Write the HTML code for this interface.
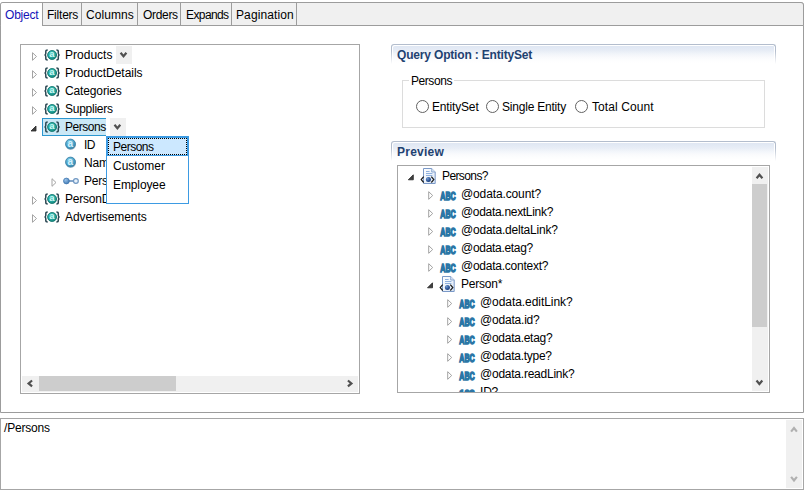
<!DOCTYPE html>
<html><head><meta charset="utf-8"><title>OData Query Builder</title>
<style>
html,body{margin:0;padding:0;}
body{width:806px;height:492px;background:#fff;position:relative;overflow:hidden;font:12px/14px "Liberation Sans",sans-serif;color:#000;}
.t{position:absolute;white-space:pre;line-height:14px;}
.abs{position:absolute;}
#folder{position:absolute;left:0;top:2px;width:802px;height:409px;border:1px solid #9c9c9c;border-radius:3px 3px 0 0;background:#fff;}
#tabbar{position:absolute;left:0;top:2px;width:802px;height:22px;border:1px solid #9c9c9c;border-radius:3px 3px 0 0;background:#f0f0f0;}
.tab{position:absolute;top:0;height:22px;border-right:1px solid #9c9c9c;}
.tab.sel{height:23px;background:#fff;border-radius:2px 0 0 0;}
.box{position:absolute;border:1px solid #a6a6a6;background:#fff;overflow:hidden;}
.sb{position:absolute;background:#f0f0f0;}
.thumb{position:absolute;background:#cdcdcd;}
.hdr{position:absolute;left:391px;width:383px;height:19px;border:1px solid #b3bdcd;border-bottom:none;border-radius:3px 3px 0 0;background:linear-gradient(#dde5f2,#ffffff);box-shadow:inset 1px 1px 0 #fff,inset -1px 0 0 #fff;}
.hdr .t{z-index:1;}
.hdr:after{content:"";position:absolute;left:-1px;right:-1px;top:6px;bottom:0;background:linear-gradient(rgba(255,255,255,0),#fff);}
.radio{position:absolute;top:19px;width:11px;height:11px;border:1px solid #626262;border-radius:50%;background:#fff;}
#group{position:absolute;left:402px;top:80px;width:361px;height:46px;border:1px solid #dcdcdc;}
#grouplabel{position:absolute;left:6px;top:-9px;width:45px;height:16px;background:#fff;}
#popup{position:absolute;left:106px;top:136px;width:81px;height:66px;border:1px solid #3d9be3;background:#fff;}
#popsel{position:absolute;left:0;top:0;width:79px;height:17px;border:1px solid #3d9be3;}
#popsel i{position:absolute;left:0;top:0;width:77px;height:15px;background:#cce8ff;border:1px dotted #000;}
#sel{position:absolute;left:42px;top:118px;width:63px;height:16px;background:#cbe8f6;border:1px solid #2d97cf;border-right:none;}
.ddbtn{position:absolute;width:16px;height:18px;background:#f0f0f0;}
svg{position:absolute;overflow:visible;}
</style></head>
<body>
<div id="folder"></div>
<div id="tabbar"><div class="tab sel" style="left:0px;width:41px"><span class="t" style="left:4px;top:5px;letter-spacing:-0.2px;color:#1414b8;">Object</span></div><div class="tab" style="left:42px;width:38px"><span class="t" style="left:4px;top:5px;letter-spacing:-0.217px;">Filters</span></div><div class="tab" style="left:81px;width:55px"><span class="t" style="left:4px;top:5px;letter-spacing:0.083px;">Columns</span></div><div class="tab" style="left:137px;width:42px"><span class="t" style="left:5px;top:5px;letter-spacing:-0.32px;">Orders</span></div><div class="tab" style="left:180px;width:50px"><span class="t" style="left:5px;top:5px;letter-spacing:-0.6px;">Expands</span></div><div class="tab" style="left:231px;width:64px"><span class="t" style="left:4px;top:5px;letter-spacing:0.1px;">Pagination</span></div></div>

<div class="box" id="treebox" style="left:20px;top:44px;width:338px;height:348px;">
 <div class="ddbtn" style="left:95px;top:1px"></div>
 <div id="sel" style="left:21px;top:73px"></div>
 <div class="ddbtn" style="left:89px;top:73px"></div>
 <span class="t" style="left:44px;top:3px;letter-spacing:0.014px;">Products</span>
<span class="t" style="left:44px;top:21px;letter-spacing:-0.038px;">ProductDetails</span>
<span class="t" style="left:44px;top:39px;letter-spacing:-0.133px;">Categories</span>
<span class="t" style="left:44px;top:57px;letter-spacing:-0.25px;">Suppliers</span>
<span class="t" style="left:44px;top:75px;letter-spacing:-0.467px;">Persons</span>
<span class="t" style="left:63px;top:93px;letter-spacing:-0.7px;">ID</span>
<span class="t" style="left:63px;top:111px;letter-spacing:-0.2px;">Name</span>
<span class="t" style="left:63px;top:129px;letter-spacing:-0.2px;">PersonDetail</span>
<span class="t" style="left:44px;top:147px;letter-spacing:-0.2px;">PersonDetails</span>
<span class="t" style="left:44px;top:165px;letter-spacing:-0.077px;">Advertisements</span>
 <svg width="338" height="348" style="left:0;top:0" viewBox="21 45 338 348"><defs>
<radialGradient id="gteal" cx="0.42" cy="0.35" r="0.75"><stop offset="0" stop-color="#4fcfc4"/><stop offset="0.55" stop-color="#22a79f"/><stop offset="1" stop-color="#11786f"/></radialGradient>
<radialGradient id="gblue" cx="0.4" cy="0.3" r="0.85"><stop offset="0" stop-color="#7fcbe6"/><stop offset="0.55" stop-color="#4aa3c9"/><stop offset="1" stop-color="#2f789c"/></radialGradient>
<radialGradient id="gnav" cx="0.35" cy="0.3" r="0.8"><stop offset="0" stop-color="#9cc4ea"/><stop offset="1" stop-color="#3a74b0"/></radialGradient>
<radialGradient id="gball" cx="0.35" cy="0.3" r="0.8"><stop offset="0" stop-color="#6f98d0"/><stop offset="0.7" stop-color="#234a8c"/><stop offset="1" stop-color="#17356e"/></radialGradient>
<linearGradient id="gdoc" x1="0" y1="0" x2="1" y2="1"><stop offset="0" stop-color="#ffffff"/><stop offset="1" stop-color="#dbe7f6"/></linearGradient>
</defs><path d="M32.5 52.7 L36.5 56.5 L32.5 60.3 Z" fill="#fff" stroke="#a3a3a3" stroke-width="1"/><g><path d="M47.7 50 q-1.9 0 -1.9 1.5 v1.8 q0 1.7 -1.3 1.7 q1.3 0 1.3 1.7 v1.8 q0 1.5 1.9 1.5" fill="none" stroke="#2c4853" stroke-width="1.5"/><path d="M56.4 50 q1.9 0 1.9 1.5 v1.8 q0 1.7 1.3 1.7 q-1.3 0 -1.3 1.7 v1.8 q0 1.5 -1.9 1.5" fill="none" stroke="#2c4853" stroke-width="1.5"/><circle cx="52.1" cy="55" r="4.5" fill="url(#gteal)" stroke="#14786f" stroke-width="0.9"/><text x="51.9" y="57.3" style="font:bold 9.5px 'Liberation Sans',sans-serif" fill="#d2f7f5" text-anchor="middle">a</text></g><path d="M32.5 70.7 L36.5 74.5 L32.5 78.3 Z" fill="#fff" stroke="#a3a3a3" stroke-width="1"/><g><path d="M47.7 68 q-1.9 0 -1.9 1.5 v1.8 q0 1.7 -1.3 1.7 q1.3 0 1.3 1.7 v1.8 q0 1.5 1.9 1.5" fill="none" stroke="#2c4853" stroke-width="1.5"/><path d="M56.4 68 q1.9 0 1.9 1.5 v1.8 q0 1.7 1.3 1.7 q-1.3 0 -1.3 1.7 v1.8 q0 1.5 -1.9 1.5" fill="none" stroke="#2c4853" stroke-width="1.5"/><circle cx="52.1" cy="73" r="4.5" fill="url(#gteal)" stroke="#14786f" stroke-width="0.9"/><text x="51.9" y="75.3" style="font:bold 9.5px 'Liberation Sans',sans-serif" fill="#d2f7f5" text-anchor="middle">a</text></g><path d="M32.5 88.7 L36.5 92.5 L32.5 96.3 Z" fill="#fff" stroke="#a3a3a3" stroke-width="1"/><g><path d="M47.7 86 q-1.9 0 -1.9 1.5 v1.8 q0 1.7 -1.3 1.7 q1.3 0 1.3 1.7 v1.8 q0 1.5 1.9 1.5" fill="none" stroke="#2c4853" stroke-width="1.5"/><path d="M56.4 86 q1.9 0 1.9 1.5 v1.8 q0 1.7 1.3 1.7 q-1.3 0 -1.3 1.7 v1.8 q0 1.5 -1.9 1.5" fill="none" stroke="#2c4853" stroke-width="1.5"/><circle cx="52.1" cy="91" r="4.5" fill="url(#gteal)" stroke="#14786f" stroke-width="0.9"/><text x="51.9" y="93.3" style="font:bold 9.5px 'Liberation Sans',sans-serif" fill="#d2f7f5" text-anchor="middle">a</text></g><path d="M32.5 106.7 L36.5 110.5 L32.5 114.3 Z" fill="#fff" stroke="#a3a3a3" stroke-width="1"/><g><path d="M47.7 104 q-1.9 0 -1.9 1.5 v1.8 q0 1.7 -1.3 1.7 q1.3 0 1.3 1.7 v1.8 q0 1.5 1.9 1.5" fill="none" stroke="#2c4853" stroke-width="1.5"/><path d="M56.4 104 q1.9 0 1.9 1.5 v1.8 q0 1.7 1.3 1.7 q-1.3 0 -1.3 1.7 v1.8 q0 1.5 -1.9 1.5" fill="none" stroke="#2c4853" stroke-width="1.5"/><circle cx="52.1" cy="109" r="4.5" fill="url(#gteal)" stroke="#14786f" stroke-width="0.9"/><text x="51.9" y="111.3" style="font:bold 9.5px 'Liberation Sans',sans-serif" fill="#d2f7f5" text-anchor="middle">a</text></g><path d="M32.5 196.7 L36.5 200.5 L32.5 204.3 Z" fill="#fff" stroke="#a3a3a3" stroke-width="1"/><g><path d="M47.7 194 q-1.9 0 -1.9 1.5 v1.8 q0 1.7 -1.3 1.7 q1.3 0 1.3 1.7 v1.8 q0 1.5 1.9 1.5" fill="none" stroke="#2c4853" stroke-width="1.5"/><path d="M56.4 194 q1.9 0 1.9 1.5 v1.8 q0 1.7 1.3 1.7 q-1.3 0 -1.3 1.7 v1.8 q0 1.5 -1.9 1.5" fill="none" stroke="#2c4853" stroke-width="1.5"/><circle cx="52.1" cy="199" r="4.5" fill="url(#gteal)" stroke="#14786f" stroke-width="0.9"/><text x="51.9" y="201.3" style="font:bold 9.5px 'Liberation Sans',sans-serif" fill="#d2f7f5" text-anchor="middle">a</text></g><path d="M32.5 214.7 L36.5 218.5 L32.5 222.3 Z" fill="#fff" stroke="#a3a3a3" stroke-width="1"/><g><path d="M47.7 212 q-1.9 0 -1.9 1.5 v1.8 q0 1.7 -1.3 1.7 q1.3 0 1.3 1.7 v1.8 q0 1.5 1.9 1.5" fill="none" stroke="#2c4853" stroke-width="1.5"/><path d="M56.4 212 q1.9 0 1.9 1.5 v1.8 q0 1.7 1.3 1.7 q-1.3 0 -1.3 1.7 v1.8 q0 1.5 -1.9 1.5" fill="none" stroke="#2c4853" stroke-width="1.5"/><circle cx="52.1" cy="217" r="4.5" fill="url(#gteal)" stroke="#14786f" stroke-width="0.9"/><text x="51.9" y="219.3" style="font:bold 9.5px 'Liberation Sans',sans-serif" fill="#d2f7f5" text-anchor="middle">a</text></g><path d="M31 131 L36 131 L36 126 Z" fill="#404040" stroke="#262626" stroke-width="0.8" stroke-linejoin="round"/><g><path d="M47.7 122 q-1.9 0 -1.9 1.5 v1.8 q0 1.7 -1.3 1.7 q1.3 0 1.3 1.7 v1.8 q0 1.5 1.9 1.5" fill="none" stroke="#2c4853" stroke-width="1.5"/><path d="M56.4 122 q1.9 0 1.9 1.5 v1.8 q0 1.7 1.3 1.7 q-1.3 0 -1.3 1.7 v1.8 q0 1.5 -1.9 1.5" fill="none" stroke="#2c4853" stroke-width="1.5"/><circle cx="52.1" cy="127" r="4.5" fill="url(#gteal)" stroke="#14786f" stroke-width="0.9"/><text x="51.9" y="129.3" style="font:bold 9.5px 'Liberation Sans',sans-serif" fill="#d2f7f5" text-anchor="middle">a</text></g><circle cx="70.7" cy="144.5" r="5.3" fill="#5f8aa3" opacity="0.6"/><circle cx="70.5" cy="144" r="4.9" fill="url(#gblue)" stroke="#3a7fa6" stroke-width="0.8"/><text x="70.4" y="146.8" style="font:bold 10px 'Liberation Sans',sans-serif" fill="#d4f1fd" text-anchor="middle">a</text><circle cx="70.7" cy="162.5" r="5.3" fill="#5f8aa3" opacity="0.6"/><circle cx="70.5" cy="162" r="4.9" fill="url(#gblue)" stroke="#3a7fa6" stroke-width="0.8"/><text x="70.4" y="164.8" style="font:bold 10px 'Liberation Sans',sans-serif" fill="#d4f1fd" text-anchor="middle">a</text><path d="M52 178.7 L56 182.5 L52 186.3 Z" fill="#fff" stroke="#a3a3a3" stroke-width="1"/><line x1="66.4" y1="181" x2="73.4" y2="181" stroke="#4f7fb2" stroke-width="1.4"/><circle cx="66.4" cy="181" r="2.9" fill="url(#gnav)" stroke="#3a72ac" stroke-width="0.7"/><circle cx="75.9" cy="181" r="2.4" fill="#e9f2fb" stroke="#6f97c2" stroke-width="1.2"/><path d="M120.6 52.72 L123.5 56.22 L126.4 52.72" fill="none" stroke="#505050" stroke-width="2.2" stroke-linejoin="miter"/><path d="M114.5 124.72 L117.4 128.22 L120.3 124.72" fill="none" stroke="#505050" stroke-width="2.2" stroke-linejoin="miter"/></svg>
 <div class="sb" style="left:1px;top:331px;width:336px;height:16px;"><div class="thumb" style="left:17px;top:0;width:137px;height:15px"></div></div>
 <svg width="338" height="348" style="left:0;top:0" viewBox="21 45 338 348"><path d="M32.08 380.5 L28.58 383.4 L32.08 386.3" fill="none" stroke="#505050" stroke-width="2.2" stroke-linejoin="miter"/><path d="M347.92 380.5 L351.42 383.4 L347.92 386.3" fill="none" stroke="#505050" stroke-width="2.2" stroke-linejoin="miter"/></svg>
</div>

<div id="popup"><div id="popsel"><i></i></div><span class="t" style="left:6px;top:3px;letter-spacing:-0.5px;">Persons</span>
<span class="t" style="left:6px;top:22px;letter-spacing:-0.014px;">Customer</span>
<span class="t" style="left:6px;top:41px;letter-spacing:-0.114px;">Employee</span></div>

<div class="hdr" style="top:44px"><span class="t" style="left:5px;top:3px;letter-spacing:-0.174px;font-weight:bold;color:#1f4271;">Query Option : EntitySet</span></div>
<div id="group"><div id="grouplabel"><span class="t" style="left:2px;top:2px;letter-spacing:-0.433px;">Persons</span></div>
<div class="radio" style="left:13px"></div><span class="t" style="left:29px;top:19px;letter-spacing:-0.163px;">EntitySet</span>
<div class="radio" style="left:83px"></div><span class="t" style="left:99px;top:19px;letter-spacing:-0.208px;">Single Entity</span>
<div class="radio" style="left:172px"></div><span class="t" style="left:189px;top:19px;letter-spacing:0.1px;">Total Count</span>
</div>
<div class="hdr" style="top:141px"><span class="t" style="left:5px;top:3px;letter-spacing:0.233px;font-weight:bold;color:#1f4271;">Preview</span></div>

<div class="box" id="prevbox" style="left:397px;top:165px;width:371px;height:226px;">
 <span class="t" style="left:44px;top:3px;letter-spacing:-0.6px;">Persons?</span>
<span class="t" style="left:63px;top:21px;letter-spacing:-0.125px;">@odata.count?</span>
<span class="t" style="left:63px;top:39px;letter-spacing:-0.307px;">@odata.nextLink?</span>
<span class="t" style="left:63px;top:57px;letter-spacing:-0.212px;">@odata.deltaLink?</span>
<span class="t" style="left:63px;top:75px;letter-spacing:-0.3px;">@odata.etag?</span>
<span class="t" style="left:63px;top:93px;letter-spacing:-0.25px;">@odata.context?</span>
<span class="t" style="left:63px;top:111px;letter-spacing:-0.217px;">Person*</span>
<span class="t" style="left:82px;top:129px;letter-spacing:-0.06px;">@odata.editLink?</span>
<span class="t" style="left:82px;top:147px;letter-spacing:-0.2px;">@odata.id?</span>
<span class="t" style="left:82px;top:165px;letter-spacing:-0.264px;">@odata.etag?</span>
<span class="t" style="left:82px;top:183px;letter-spacing:-0.264px;">@odata.type?</span>
<span class="t" style="left:82px;top:201px;letter-spacing:-0.233px;">@odata.readLink?</span>
<span class="t" style="left:82px;top:219px;letter-spacing:-0.2px;">ID?</span>
 <svg width="371" height="226" style="left:0;top:0" viewBox="398 166 371 226"><defs>
<radialGradient id="hteal" cx="0.42" cy="0.35" r="0.75"><stop offset="0" stop-color="#4fcfc4"/><stop offset="0.55" stop-color="#22a79f"/><stop offset="1" stop-color="#11786f"/></radialGradient>
<radialGradient id="hblue" cx="0.4" cy="0.3" r="0.85"><stop offset="0" stop-color="#7fcbe6"/><stop offset="0.55" stop-color="#4aa3c9"/><stop offset="1" stop-color="#2f789c"/></radialGradient>
<radialGradient id="hnav" cx="0.35" cy="0.3" r="0.8"><stop offset="0" stop-color="#9cc4ea"/><stop offset="1" stop-color="#3a74b0"/></radialGradient>
<radialGradient id="hball" cx="0.35" cy="0.3" r="0.8"><stop offset="0" stop-color="#6f98d0"/><stop offset="0.7" stop-color="#234a8c"/><stop offset="1" stop-color="#17356e"/></radialGradient>
<linearGradient id="hdoc" x1="0" y1="0" x2="1" y2="1"><stop offset="0" stop-color="#ffffff"/><stop offset="1" stop-color="#dbe7f6"/></linearGradient>
</defs><path d="M408.3 179.8 L413.3 179.8 L413.3 174.8 Z" fill="#404040" stroke="#262626" stroke-width="0.8" stroke-linejoin="round"/><path d="M423.5 168.5 h8.2 l3.5 3.5 v11.5 h-11.7 Z" fill="url(#hdoc)" stroke="#7a99c8" stroke-width="1"/><path d="M431.7 168.5 v3.5 h3.5" fill="#dce7f5" stroke="#7a99c8" stroke-width="0.8"/><line x1="426" y1="171.5" x2="429.6" y2="171.5" stroke="#8fb0dd" stroke-width="1"/><line x1="426" y1="173.5" x2="432.4" y2="173.5" stroke="#8fb0dd" stroke-width="1"/><line x1="426" y1="175.5" x2="432.4" y2="175.5" stroke="#8fb0dd" stroke-width="1"/><circle cx="428.4" cy="179.6" r="2.5" fill="url(#hball)"/><path d="M423.7 176.7 l-2.5 2.9 l2.5 2.9" fill="none" stroke="#1a1a1a" stroke-width="1.2"/><path d="M431.3 176.7 l2.5 2.9 l-2.5 2.9" fill="none" stroke="#1a1a1a" stroke-width="1.2"/><path d="M428.7 191.7 L432.7 195.5 L428.7 199.3 Z" fill="#fff" stroke="#a3a3a3" stroke-width="1"/><text x="440.3" y="199.6" font-family="Liberation Sans, sans-serif" font-size="11.8" font-weight="bold" fill="#2b76a6" stroke="#2b76a6" stroke-width="1.5" textLength="15.4" lengthAdjust="spacingAndGlyphs">ABC</text><path d="M428.7 209.7 L432.7 213.5 L428.7 217.3 Z" fill="#fff" stroke="#a3a3a3" stroke-width="1"/><text x="440.3" y="217.6" font-family="Liberation Sans, sans-serif" font-size="11.8" font-weight="bold" fill="#2b76a6" stroke="#2b76a6" stroke-width="1.5" textLength="15.4" lengthAdjust="spacingAndGlyphs">ABC</text><path d="M428.7 227.7 L432.7 231.5 L428.7 235.3 Z" fill="#fff" stroke="#a3a3a3" stroke-width="1"/><text x="440.3" y="235.6" font-family="Liberation Sans, sans-serif" font-size="11.8" font-weight="bold" fill="#2b76a6" stroke="#2b76a6" stroke-width="1.5" textLength="15.4" lengthAdjust="spacingAndGlyphs">ABC</text><path d="M428.7 245.7 L432.7 249.5 L428.7 253.3 Z" fill="#fff" stroke="#a3a3a3" stroke-width="1"/><text x="440.3" y="253.6" font-family="Liberation Sans, sans-serif" font-size="11.8" font-weight="bold" fill="#2b76a6" stroke="#2b76a6" stroke-width="1.5" textLength="15.4" lengthAdjust="spacingAndGlyphs">ABC</text><path d="M428.7 263.7 L432.7 267.5 L428.7 271.3 Z" fill="#fff" stroke="#a3a3a3" stroke-width="1"/><text x="440.3" y="271.6" font-family="Liberation Sans, sans-serif" font-size="11.8" font-weight="bold" fill="#2b76a6" stroke="#2b76a6" stroke-width="1.5" textLength="15.4" lengthAdjust="spacingAndGlyphs">ABC</text><path d="M427.5 287.8 L432.5 287.8 L432.5 282.8 Z" fill="#404040" stroke="#262626" stroke-width="0.8" stroke-linejoin="round"/><path d="M442.5 276.5 h8.2 l3.5 3.5 v11.5 h-11.7 Z" fill="url(#hdoc)" stroke="#7a99c8" stroke-width="1"/><path d="M450.7 276.5 v3.5 h3.5" fill="#dce7f5" stroke="#7a99c8" stroke-width="0.8"/><line x1="445" y1="279.5" x2="448.6" y2="279.5" stroke="#8fb0dd" stroke-width="1"/><line x1="445" y1="281.5" x2="451.4" y2="281.5" stroke="#8fb0dd" stroke-width="1"/><line x1="445" y1="283.5" x2="451.4" y2="283.5" stroke="#8fb0dd" stroke-width="1"/><circle cx="447.4" cy="287.6" r="2.5" fill="url(#hball)"/><path d="M442.7 284.7 l-2.5 2.9 l2.5 2.9" fill="none" stroke="#1a1a1a" stroke-width="1.2"/><path d="M450.3 284.7 l2.5 2.9 l-2.5 2.9" fill="none" stroke="#1a1a1a" stroke-width="1.2"/><path d="M447.7 299.7 L451.7 303.5 L447.7 307.3 Z" fill="#fff" stroke="#a3a3a3" stroke-width="1"/><text x="459.3" y="307.6" font-family="Liberation Sans, sans-serif" font-size="11.8" font-weight="bold" fill="#2b76a6" stroke="#2b76a6" stroke-width="1.5" textLength="15.4" lengthAdjust="spacingAndGlyphs">ABC</text><path d="M447.7 317.7 L451.7 321.5 L447.7 325.3 Z" fill="#fff" stroke="#a3a3a3" stroke-width="1"/><text x="459.3" y="325.6" font-family="Liberation Sans, sans-serif" font-size="11.8" font-weight="bold" fill="#2b76a6" stroke="#2b76a6" stroke-width="1.5" textLength="15.4" lengthAdjust="spacingAndGlyphs">ABC</text><path d="M447.7 335.7 L451.7 339.5 L447.7 343.3 Z" fill="#fff" stroke="#a3a3a3" stroke-width="1"/><text x="459.3" y="343.6" font-family="Liberation Sans, sans-serif" font-size="11.8" font-weight="bold" fill="#2b76a6" stroke="#2b76a6" stroke-width="1.5" textLength="15.4" lengthAdjust="spacingAndGlyphs">ABC</text><path d="M447.7 353.7 L451.7 357.5 L447.7 361.3 Z" fill="#fff" stroke="#a3a3a3" stroke-width="1"/><text x="459.3" y="361.6" font-family="Liberation Sans, sans-serif" font-size="11.8" font-weight="bold" fill="#2b76a6" stroke="#2b76a6" stroke-width="1.5" textLength="15.4" lengthAdjust="spacingAndGlyphs">ABC</text><path d="M447.7 371.7 L451.7 375.5 L447.7 379.3 Z" fill="#fff" stroke="#a3a3a3" stroke-width="1"/><text x="459.3" y="379.6" font-family="Liberation Sans, sans-serif" font-size="11.8" font-weight="bold" fill="#2b76a6" stroke="#2b76a6" stroke-width="1.5" textLength="15.4" lengthAdjust="spacingAndGlyphs">ABC</text><text x="459.3" y="397.6" font-family="Liberation Sans, sans-serif" font-size="11.8" font-weight="bold" fill="#2b76a6" stroke="#2b76a6" stroke-width="1.5" textLength="15.4" lengthAdjust="spacingAndGlyphs">123</text></svg>
 <div class="sb" style="left:354px;top:1px;width:16px;height:224px;"><div class="thumb" style="left:0;top:17px;width:15px;height:143px"></div></div>
 <svg width="371" height="226" style="left:0;top:0" viewBox="398 166 371 226"><path d="M756.6 178.28 L759.5 174.78 L762.4 178.28" fill="none" stroke="#505050" stroke-width="2.2" stroke-linejoin="miter"/><path d="M756.5 380.52 L759.4 384.02 L762.3 380.52" fill="none" stroke="#505050" stroke-width="2.2" stroke-linejoin="miter"/></svg>
</div>

<div class="box" id="ta" style="left:0;top:418px;width:802px;height:70px;">
 <span class="t" style="left:3px;top:2px;letter-spacing:-0.2px;">/Persons</span>
 <div class="sb" style="left:785px;top:1px;width:16px;height:68px;"></div>
 <svg width="802" height="70" style="left:0;top:0" viewBox="1 419 802 70"><path d="M791.1 431.58 L794 428.08 L796.9 431.58" fill="none" stroke="#b0b0b0" stroke-width="2.2" stroke-linejoin="miter"/><path d="M791.1 476.92 L794 480.42 L796.9 476.92" fill="none" stroke="#b0b0b0" stroke-width="2.2" stroke-linejoin="miter"/></svg>
</div>
</body></html>
